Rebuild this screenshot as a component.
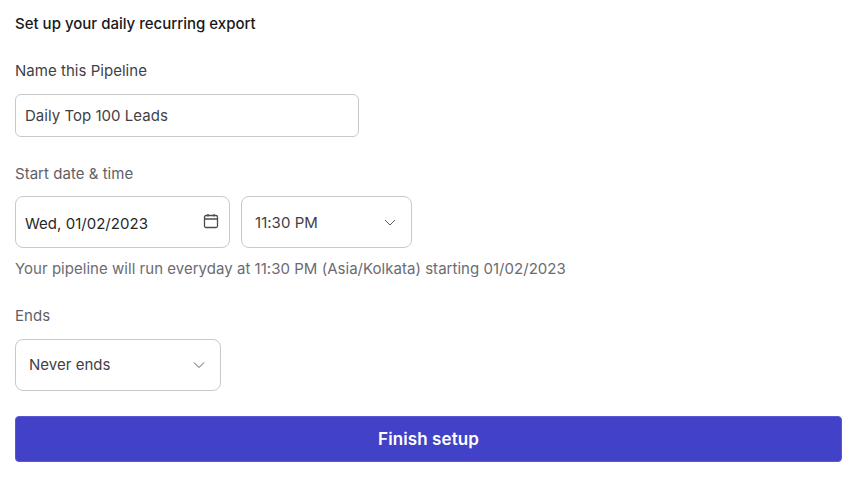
<div class="page">
	<h1>Set up your daily recurring export</h1>

	<label class="label name-label" for="name">Name this Pipeline</label>
	<div class="field name-field" id="name">Daily Top 100 Leads</div>

	<div class="label muted start-label">Start date &amp; time</div>
	<div class="row">
		<div class="field tall date">
			<span>Wed, 01/02/2023</span>
			<svg width="16" height="16" viewBox="0 0 16 16" fill="none" stroke="#4b4b52" stroke-width="1.3">
				<rect x="1.5" y="2.5" width="13" height="12" rx="1.5" />
				<path d="M1.5 6h13M5 1v2.5M11 1v2.5" />
			</svg>
		</div>
		<div class="field tall time">
			<span>11:30 PM</span>
			<svg class="chev" width="14" height="14" viewBox="0 0 14 14" fill="none" stroke="#5a5a60" stroke-width="1">
				<path d="M2 5l5 5 5-5" />
			</svg>
		</div>
	</div>
	<p class="hint">Your pipeline will run everyday at 11:30 PM (Asia/Kolkata) starting 01/02/2023</p>

	<div class="label muted ends-label">Ends</div>
	<div class="field tall ends">
		<span>Never ends</span>
		<svg class="chev" width="14" height="14" viewBox="0 0 14 14" fill="none" stroke="#5a5a60" stroke-width="1">
			<path d="M2 4.5l5 5 5-5" />
		</svg>
	</div>

	<button class="finish">Finish setup</button>
</div>

<style>
	:global(body) {
		margin: 0;
		background: #fff;
	}
	.page {
		width: 854px;
		height: 480px;
		box-sizing: border-box;
		padding: 15px 12px 0 15px;
		font-family: Inter, "Liberation Sans", sans-serif;
		font-size: 15px;
		letter-spacing: 0.03px;
		color: #3f3f46;
		overflow: hidden;
	}
	h1 {
		margin: 0;
		font-size: 15px;
		line-height: 18px;
		font-weight: 500;
		letter-spacing: 0;
		color: #18181b;
	}
	.label {
		display: block;
		line-height: 17px;
	}
	.name-label {
		margin-top: 29px;
	}
	.muted {
		color: #5f5f66;
	}
	.field {
		box-sizing: border-box;
		display: flex;
		align-items: center;
		justify-content: space-between;
		background: #fff;
		border: 1px solid #c9c9cc;
		border-radius: 6px;
	}
	.name-field {
		margin-top: 15px;
		width: 344px;
		height: 43px;
		padding: 0 9px;
	}
	.start-label {
		margin-top: 28px;
	}
	.row {
		display: flex;
		gap: 11px;
		margin-top: 14px;
	}
	.tall {
		height: 52px;
		border-radius: 8px;
	}
	.date {
		width: 215px;
		padding: 0 10px 0 9px;
		color: #27272a;
	}
	.date svg {
		margin-top: -2px;
	}
	.date span {
		padding-top: 2px;
	}
	.time {
		width: 171px;
		padding: 0 14px 0 13px;
	}
	.hint {
		margin: 12px 0 0;
		line-height: 17px;
		color: #6b6b72;
	}
	.ends-label {
		margin-top: 30px;
	}
	.ends {
		margin-top: 15px;
		width: 206px;
		padding: 0 14px 0 13px;
	}
	.ends span {
		margin-top: -1px;
	}
	.finish {
		display: block;
		margin-top: 25px;
		width: 827px;
		height: 46px;
		border: 1px solid #5a56d6;
		border-radius: 4px;
		background: #4242c8;
		color: #fff;
		font: 600 17px Inter, "Liberation Sans", sans-serif;
		letter-spacing: 0.1px;
	}
</style>
